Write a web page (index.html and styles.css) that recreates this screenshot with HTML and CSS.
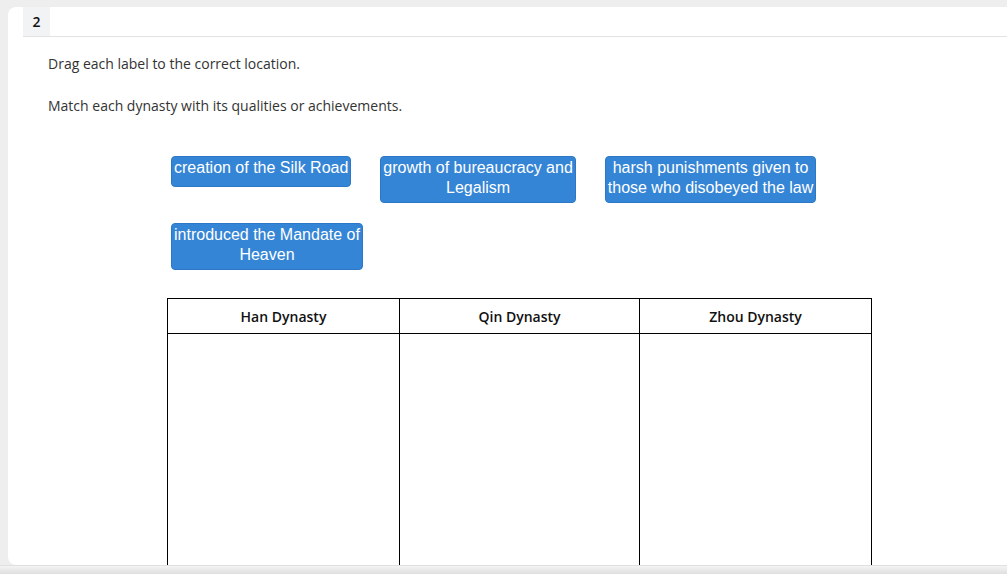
FILE: index.html
```html
<!DOCTYPE html>
<html lang="en">
<head>
    <meta charset="UTF-8">
    <title>Question 2</title>
    <link rel="stylesheet" href="styles.css">
</head>
<body>
    <div class="page">
        <div class="card">
            <div class="qhead">
                <span class="qnum">2</span>
            </div>
            <div class="prompt">
                <p>Drag each label to the correct location.</p>
                <p class="second">Match each dynasty with its qualities or achievements.</p>
            </div>
            <!-- draggable labels -->
            <div class="labels">
                <div class="label single">creation of the Silk Road</div>
                <div class="label">growth of bureaucracy and<br>Legalism</div>
                <div class="label">harsh punishments given to<br>those who disobeyed the law</div>
                <div class="label">introduced the Mandate of<br>Heaven</div>
            </div>
            <!-- drop targets -->
            <table class="targets">
                <tr>
                    <th class="side">Han Dynasty</th>
                    <th class="mid">Qin Dynasty</th>
                    <th class="side">Zhou Dynasty</th>
                </tr>
                <tr class="drop">
                    <td></td>
                    <td></td>
                    <td></td>
                </tr>
            </table>
        </div>
    </div>
    <div class="hbar"></div>
</body>
</html>
```

FILE: styles.css
```css
html, body {
    margin: 0;
    padding: 0;
}
body {
    background-color: #eeeeee;
    font-family: "Open Sans", Arial, sans-serif;
    color: #333;
    height: 574px;
    overflow: hidden;
}
.page {
    padding: 7px 0 0 8px;
    height: 558px;
}
.card {
    background-color: #fff;
    border-radius: 8px 0 0 8px;
    height: 558px;
    padding-left: 15px;
    overflow: hidden;
}
.qhead {
    display: flex;
    height: 29px;
    border-bottom: 1px solid #e2e2e2;
}
.qnum {
    width: 27px;
    background-color: #f2f3f4;
    font-weight: 600;
    font-size: 14px;
    color: #111;
    display: flex;
    align-items: center;
    justify-content: center;
}
.prompt {
    padding-left: 25px;
    padding-top: 17px;
    font-size: 14px;
    line-height: 20px;
}
.prompt p {
    margin: 0;
}
.prompt .second {
    margin-top: 22px;
}
.labels {
    display: flex;
    flex-wrap: wrap;
    align-items: flex-start;
    column-gap: 29px;
    row-gap: 20px;
    width: 680px;
    margin: 40px 0 0 148px;
}
.label {
    background-color: #3585d6;
    border: 1px solid #2d78c6;
    border-radius: 4px;
    color: #fff;
    font-family: "Liberation Sans", Arial, sans-serif;
    font-size: 16px;
    line-height: 20px;
    text-align: center;
    white-space: nowrap;
    padding: 1px 2px 4px;
    box-sizing: border-box;
}
.label.single {
    height: 31px;
}
.targets {
    border-collapse: collapse;
    margin: 28px 0 0 144px;
    font-size: 14px;
}
.targets th {
    border: 1px solid #000;
    height: 34px;
    padding: 0;
    color: #111;
    font-weight: 600;
}
.targets th.side {
    width: 231px;
}
.targets th.mid {
    width: 239px;
}
.targets td {
    border: 1px solid #000;
    height: 300px;
}
.hbar {
    height: 9px;
    background: linear-gradient(#f4f4f4, #dcdcdc);
    border-top: 1px solid #e0e0e0;
}
```
